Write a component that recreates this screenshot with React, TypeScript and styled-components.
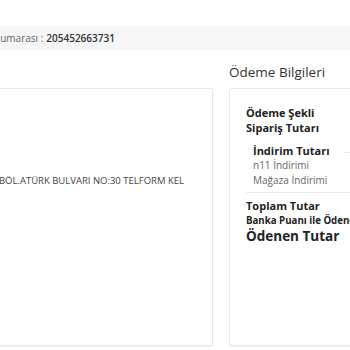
import React from "react"
import styled, { createGlobalStyle } from "styled-components"

const GlobalStyle = createGlobalStyle`
  html, body {
    margin: 0;
    padding: 0;
    background: #fff;
    overflow: hidden;
  }
  body {
    font-family: "Open Sans", "Liberation Sans", sans-serif;
    color: #333;
  }
`

const Page = styled.div`
  width: 350px;
  height: 350px;
  overflow: hidden;
  padding-top: 26px;
  box-sizing: border-box;
`

const Shifted = styled.div`
  margin-left: -200px;
  width: 720px;
`

const OrderBar = styled.div`
  height: 24px;
  background: #f6f6f6;
  display: flex;
  align-items: center;
  padding-left: 159px;
  font-size: 10px;
  color: #666;
  white-space: nowrap;

  strong {
    font-weight: 600;
    color: #333;
    margin-left: 3px;
  }
`

const Columns = styled.div`
  display: grid;
  grid-template-columns: 413px 270px;
  column-gap: 16px;
  margin-top: 14px;
`

const Column = styled.div`
  display: flex;
  flex-direction: column;
`

const ColumnTitle = styled.h3<{ $hidden?: boolean }>`
  margin: 0 0 7px;
  height: 17px;
  font-size: 13.5px;
  line-height: 17px;
  font-weight: 400;
  color: #333;
  visibility: ${(p) => (p.$hidden ? "hidden" : "visible")};
`

const Card = styled.div`
  border: 1px solid #e8e8e8;
  border-radius: 2px;
  box-shadow: 0 1px 2px rgba(0, 0, 0, 0.05);
  height: 258px;
  box-sizing: border-box;
`

const AddressBody = styled.div`
  padding: 85px 0 0 190px;
  font-size: 9.5px;
  color: #444;
  white-space: nowrap;
`

const PaymentBody = styled.div`
  padding: 16px 0 0 16px;
  white-space: nowrap;
`

const Label = styled.div<{ $size?: number; $weight?: number; $muted?: boolean }>`
  font-size: ${(p) => p.$size ?? 11}px;
  font-weight: ${(p) => p.$weight ?? 700};
  color: ${(p) => (p.$muted ? "#666" : "#222")};
  line-height: ${(p) => Math.max(15, (p.$size ?? 11) + 4)}px;
`

const DiscountGroup = styled.div`
  padding: 8px 0 4px 7px;
  border-bottom: 1px solid #ececec;
  margin-bottom: 5px;
`

const DiscountHead = styled.div`
  display: flex;
  align-items: center;
  gap: 14px;

  &::after {
    content: "";
    flex: 1;
    margin-top: 3px;
    border-top: 1px solid #ececec;
  }
`

export default function App(): JSX.Element {
  return (
    <Page>
      <GlobalStyle />
      <Shifted>
        <OrderBar>
          Sipariş Numarası :<strong>205452663731</strong>
        </OrderBar>
        <Columns>
          <Column>
            <ColumnTitle $hidden>Teslimat Bilgileri</ColumnTitle>
            <Card>
              <AddressBody>2.BÖL.ATÜRK BULVARI NO:30 TELFORM KEL</AddressBody>
            </Card>
          </Column>
          <Column>
            <ColumnTitle>Ödeme Bilgileri</ColumnTitle>
            <Card>
              <PaymentBody>
                <Label>Ödeme Şekli</Label>
                <Label>Sipariş Tutarı</Label>
                <DiscountGroup>
                  <DiscountHead>
                    <Label>İndirim Tutarı</Label>
                  </DiscountHead>
                  <Label $size={10} $weight={400} $muted>n11 İndirimi</Label>
                  <Label $size={10} $weight={400} $muted>Mağaza İndirimi</Label>
                </DiscountGroup>
                <Label>Toplam Tutar</Label>
                <Label $size={9.7}>Banka Puanı ile Ödenen Tutar</Label>
                <Label $size={13.5}>Ödenen Tutar</Label>
              </PaymentBody>
            </Card>
          </Column>
        </Columns>
      </Shifted>
    </Page>
  )
}
